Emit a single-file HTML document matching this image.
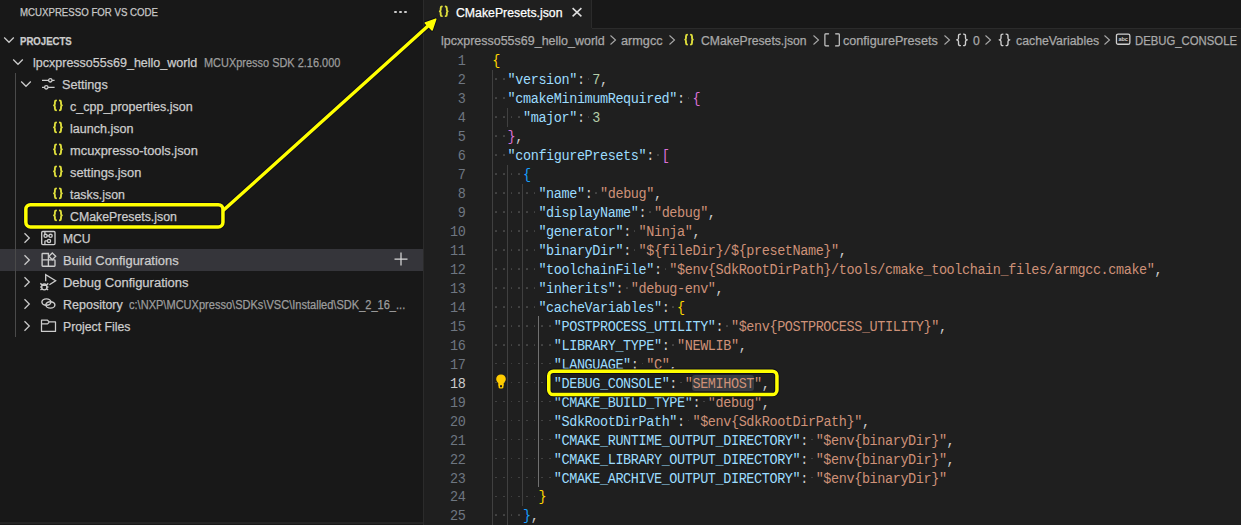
<!DOCTYPE html>
<html><head><meta charset="utf-8"><style>
html,body{margin:0;padding:0;}
body{width:1241px;height:525px;overflow:hidden;position:relative;background:#1f1f1f;font-family:"Liberation Sans",sans-serif;}
.t{position:absolute;white-space:pre;transform-origin:0 0;-webkit-text-stroke:0.25px currentColor;}
.ln{position:absolute;left:418.5px;width:47px;text-align:right;font-family:"Liberation Mono",monospace;font-size:13.5px;line-height:19px;letter-spacing:-0.4px;transform:scaleY(1.07);transform-origin:0 14px;}
.cl{position:absolute;left:492.2px;white-space:pre;font-family:"Liberation Mono",monospace;font-size:13.5px;line-height:19px;letter-spacing:-0.4px;transform:scaleY(1.07);transform-origin:0 14px;}
</style></head><body>
<div style="position:absolute;left:0px;top:0px;width:423px;height:525px;background:#181818;"></div>
<div style="position:absolute;left:423px;top:0px;width:1px;height:525px;background:#2b2b2b;"></div>
<div style="position:absolute;left:0px;top:522px;width:423px;height:2px;background:#242424;"></div>
<div style="position:absolute;left:424px;top:0px;width:817px;height:28px;background:#181818;"></div>
<div style="position:absolute;left:592px;top:28px;width:649px;height:1px;background:#2b2b2b;"></div>
<div style="position:absolute;left:424px;top:0px;width:167px;height:29px;background:#1f1f1f;"></div>
<div style="position:absolute;left:591px;top:0px;width:1px;height:28px;background:#2b2b2b;"></div>
<div class="t" style="left:19.70px;top:6.04px;font-size:11px;line-height:12.65px;color:#c8c8c8;font-weight:normal;transform:scaleX(0.8783)">MCUXPRESSO FOR VS CODE</div>
<div style="position:absolute;left:393.8px;top:10.5px;width:2.8px;height:2.8px;border-radius:50%;background:#cccccc"></div>
<div style="position:absolute;left:398.8px;top:10.5px;width:2.8px;height:2.8px;border-radius:50%;background:#cccccc"></div>
<div style="position:absolute;left:403.8px;top:10.5px;width:2.8px;height:2.8px;border-radius:50%;background:#cccccc"></div>
<div class="t" style="left:19.70px;top:34.84px;font-size:11px;line-height:12.65px;color:#cccccc;font-weight:bold;transform:scaleX(0.8726)">PROJECTS</div>
<svg style="position:absolute;left:3.3000000000000007px;top:34.3px" width="12" height="12" viewBox="0 0 12 12"><path d="M1.2 3.5 L6 8.3 L10.8 3.5" fill="none" stroke="#cccccc" stroke-width="1.25"/></svg>
<div style="position:absolute;left:0px;top:249px;width:423px;height:22px;background:#35353a;"></div>
<div style="position:absolute;left:15px;top:73px;width:1px;height:264px;background:#4a4a4a;"></div>
<svg style="position:absolute;left:12.3px;top:56px" width="12" height="12" viewBox="0 0 12 12"><path d="M1.2 3.5 L6 8.3 L10.8 3.5" fill="none" stroke="#cccccc" stroke-width="1.25"/></svg>
<div class="t" style="left:32.60px;top:55.79px;font-size:12.5px;line-height:14.37px;color:#cccccc;font-weight:normal;transform:scaleX(1.0012)">lpcxpresso55s69_hello_world</div>
<div class="t" style="left:203.50px;top:57.24px;font-size:12px;line-height:13.80px;color:#9d9d9d;font-weight:normal;transform:scaleX(0.9125)">MCUXpresso SDK 2.16.000</div>
<svg style="position:absolute;left:20.3px;top:78px" width="12" height="12" viewBox="0 0 12 12"><path d="M1.2 3.5 L6 8.3 L10.8 3.5" fill="none" stroke="#cccccc" stroke-width="1.25"/></svg>
<svg style="position:absolute;left:40px;top:76px" width="16" height="16" viewBox="0 0 16 16"><g stroke="#cccccc" stroke-width="1.3" fill="none"><path d="M2 4.3 H8.6 M12 4.3 H14.6"/><circle cx="10.3" cy="4.3" r="1.7"/><path d="M2 11.3 H4.6 M8 11.3 H14.6"/><circle cx="6.3" cy="11.3" r="1.7"/></g></svg>
<div class="t" style="left:62.30px;top:78.09px;font-size:12.5px;line-height:14.37px;color:#cccccc;font-weight:normal;transform:scaleX(1.0127)">Settings</div>
<svg style="position:absolute;left:0;top:0;overflow:visible" width="1" height="1"><path d="M56.05 100.45 Q54.89 100.45 54.89 102.15 V103.65 Q54.89 104.95 54.02 105.35 Q54.89 105.75 54.89 107.05 V108.55 Q54.89 110.25 56.05 110.25 M59.85 100.45 Q61.01 100.45 61.01 102.15 V103.65 Q61.01 104.95 61.88 105.35 Q61.01 105.75 61.01 107.05 V108.55 Q61.01 110.25 59.85 110.25" fill="none" stroke="#dede3c" stroke-width="1.9" stroke-linecap="round" stroke-linejoin="round"/></svg>
<div class="t" style="left:70.20px;top:100.09px;font-size:12.5px;line-height:14.37px;color:#cccccc;font-weight:normal;transform:scaleX(1.0037)">c_cpp_properties.json</div>
<svg style="position:absolute;left:0;top:0;overflow:visible" width="1" height="1"><path d="M56.05 122.45 Q54.89 122.45 54.89 124.15 V125.65 Q54.89 126.95 54.02 127.35 Q54.89 127.75 54.89 129.05 V130.55 Q54.89 132.25 56.05 132.25 M59.85 122.45 Q61.01 122.45 61.01 124.15 V125.65 Q61.01 126.95 61.88 127.35 Q61.01 127.75 61.01 129.05 V130.55 Q61.01 132.25 59.85 132.25" fill="none" stroke="#dede3c" stroke-width="1.9" stroke-linecap="round" stroke-linejoin="round"/></svg>
<div class="t" style="left:70.20px;top:122.09px;font-size:12.5px;line-height:14.37px;color:#cccccc;font-weight:normal;transform:scaleX(1.0040)">launch.json</div>
<svg style="position:absolute;left:0;top:0;overflow:visible" width="1" height="1"><path d="M56.05 144.45 Q54.89 144.45 54.89 146.15 V147.65 Q54.89 148.95 54.02 149.35 Q54.89 149.75 54.89 151.05 V152.55 Q54.89 154.25 56.05 154.25 M59.85 144.45 Q61.01 144.45 61.01 146.15 V147.65 Q61.01 148.95 61.88 149.35 Q61.01 149.75 61.01 151.05 V152.55 Q61.01 154.25 59.85 154.25" fill="none" stroke="#dede3c" stroke-width="1.9" stroke-linecap="round" stroke-linejoin="round"/></svg>
<div class="t" style="left:70.20px;top:144.09px;font-size:12.5px;line-height:14.37px;color:#cccccc;font-weight:normal;transform:scaleX(1.0283)">mcuxpresso-tools.json</div>
<svg style="position:absolute;left:0;top:0;overflow:visible" width="1" height="1"><path d="M56.05 166.45 Q54.89 166.45 54.89 168.15 V169.65 Q54.89 170.95 54.02 171.35 Q54.89 171.75 54.89 173.05 V174.55 Q54.89 176.25 56.05 176.25 M59.85 166.45 Q61.01 166.45 61.01 168.15 V169.65 Q61.01 170.95 61.88 171.35 Q61.01 171.75 61.01 173.05 V174.55 Q61.01 176.25 59.85 176.25" fill="none" stroke="#dede3c" stroke-width="1.9" stroke-linecap="round" stroke-linejoin="round"/></svg>
<div class="t" style="left:70.20px;top:166.09px;font-size:12.5px;line-height:14.37px;color:#cccccc;font-weight:normal;transform:scaleX(1.0259)">settings.json</div>
<svg style="position:absolute;left:0;top:0;overflow:visible" width="1" height="1"><path d="M56.05 188.45 Q54.89 188.45 54.89 190.15 V191.65 Q54.89 192.95 54.02 193.35 Q54.89 193.75 54.89 195.05 V196.55 Q54.89 198.25 56.05 198.25 M59.85 188.45 Q61.01 188.45 61.01 190.15 V191.65 Q61.01 192.95 61.88 193.35 Q61.01 193.75 61.01 195.05 V196.55 Q61.01 198.25 59.85 198.25" fill="none" stroke="#dede3c" stroke-width="1.9" stroke-linecap="round" stroke-linejoin="round"/></svg>
<div class="t" style="left:70.20px;top:188.09px;font-size:12.5px;line-height:14.37px;color:#cccccc;font-weight:normal;transform:scaleX(0.9870)">tasks.json</div>
<svg style="position:absolute;left:0;top:0;overflow:visible" width="1" height="1"><path d="M56.05 210.45 Q54.89 210.45 54.89 212.15 V213.65 Q54.89 214.95 54.02 215.35 Q54.89 215.75 54.89 217.05 V218.55 Q54.89 220.25 56.05 220.25 M59.85 210.45 Q61.01 210.45 61.01 212.15 V213.65 Q61.01 214.95 61.88 215.35 Q61.01 215.75 61.01 217.05 V218.55 Q61.01 220.25 59.85 220.25" fill="none" stroke="#dede3c" stroke-width="1.9" stroke-linecap="round" stroke-linejoin="round"/></svg>
<div class="t" style="left:70.20px;top:210.09px;font-size:12.5px;line-height:14.37px;color:#cccccc;font-weight:normal;transform:scaleX(0.9864)">CMakePresets.json</div>
<svg style="position:absolute;left:20.8px;top:232px" width="12" height="12" viewBox="0 0 12 12"><path d="M3.5 1.2 L8.3 6 L3.5 10.8" fill="none" stroke="#cccccc" stroke-width="1.25"/></svg>
<div class="t" style="left:62.90px;top:232.09px;font-size:12.5px;line-height:14.37px;color:#cccccc;font-weight:normal;transform:scaleX(0.9684)">MCU</div>
<svg style="position:absolute;left:20.8px;top:254px" width="12" height="12" viewBox="0 0 12 12"><path d="M3.5 1.2 L8.3 6 L3.5 10.8" fill="none" stroke="#cccccc" stroke-width="1.25"/></svg>
<div class="t" style="left:62.90px;top:254.09px;font-size:12.5px;line-height:14.37px;color:#cccccc;font-weight:normal;transform:scaleX(1.0333)">Build Configurations</div>
<svg style="position:absolute;left:20.8px;top:276px" width="12" height="12" viewBox="0 0 12 12"><path d="M3.5 1.2 L8.3 6 L3.5 10.8" fill="none" stroke="#cccccc" stroke-width="1.25"/></svg>
<div class="t" style="left:62.90px;top:276.09px;font-size:12.5px;line-height:14.37px;color:#cccccc;font-weight:normal;transform:scaleX(1.0383)">Debug Configurations</div>
<svg style="position:absolute;left:20.8px;top:298px" width="12" height="12" viewBox="0 0 12 12"><path d="M3.5 1.2 L8.3 6 L3.5 10.8" fill="none" stroke="#cccccc" stroke-width="1.25"/></svg>
<div class="t" style="left:62.90px;top:298.09px;font-size:12.5px;line-height:14.37px;color:#cccccc;font-weight:normal;transform:scaleX(1.0008)">Repository</div>
<svg style="position:absolute;left:20.8px;top:320px" width="12" height="12" viewBox="0 0 12 12"><path d="M3.5 1.2 L8.3 6 L3.5 10.8" fill="none" stroke="#cccccc" stroke-width="1.25"/></svg>
<div class="t" style="left:62.90px;top:320.09px;font-size:12.5px;line-height:14.37px;color:#cccccc;font-weight:normal;transform:scaleX(0.9804)">Project Files</div>
<div class="t" style="left:129.20px;top:299.34px;font-size:12px;line-height:13.80px;color:#9d9d9d;font-weight:normal;transform:scaleX(0.9203)">c:\NXP\MCUXpresso\SDKs\VSC\Installed\SDK_2_16_...</div>
<svg style="position:absolute;left:38px;top:228px" width="22" height="20" viewBox="0 0 22 20"><g stroke="#cccccc" stroke-width="1.35" fill="none"><rect x="3.7" y="3.5" width="13.3" height="13.1" rx="1"/><circle cx="7.6" cy="7.8" r="1.6"/><circle cx="12.6" cy="7.8" r="1.6"/><circle cx="11" cy="12.9" r="1.6"/><path d="M6.9 4 V6.2 M9.2 7.8 H11 M9.4 12.9 H7.6 Q6.9 12.9 6.9 13.6 V16.6"/></g></svg>
<svg style="position:absolute;left:38px;top:250px" width="22" height="20" viewBox="0 0 22 20"><g stroke="#cccccc" stroke-width="1.35" fill="none"><path d="M4.1 4.1 Q4.1 3.5 4.7 3.5 H10.4 V16.2 H4.7 Q4.1 16.2 4.1 15.6 Z"/><path d="M4.1 9.9 H16.4 Q17 9.9 17 10.5 V15.6 Q17 16.2 16.4 16.2 H10.4"/><path d="M14.3 2.9 L17.7 6.3 L14.3 9.7 L10.9 6.3 Z"/></g></svg>
<svg style="position:absolute;left:36px;top:272px" width="24" height="20" viewBox="0 0 24 20"><g stroke="#cccccc" stroke-width="1.35" fill="none"><path d="M9.7 9.2 V2.6 L19.6 8.8 L13.4 12.8"/><ellipse cx="8.3" cy="14.9" rx="2.6" ry="2.9"/><path d="M5.7 13.2 H10.9 M4.3 11.4 L5.8 12.6 M12.3 11.4 L10.8 12.6 M4.2 15 H5.6 M11 15 H12.4 M4.5 18 L5.9 16.8 M12.1 18 L10.7 16.8"/></g></svg>
<svg style="position:absolute;left:36px;top:294px" width="24" height="20" viewBox="0 0 24 20"><g stroke="#cccccc" stroke-width="1.4" fill="none"><ellipse cx="10.4" cy="8.1" rx="4.5" ry="3.2"/><ellipse cx="14.4" cy="10.9" rx="4.5" ry="3.2"/></g></svg>
<svg style="position:absolute;left:36px;top:316px" width="24" height="20" viewBox="0 0 24 20"><g stroke="#cccccc" stroke-width="1.25" fill="none" stroke-linejoin="round"><path d="M5.5 4.2 H11.5 L13.2 5.9 H19.5 V15.4 H5.5 Z"/><path d="M5.5 7.9 H11.5 L13.2 6.2"/></g></svg>
<svg style="position:absolute;left:392.5px;top:251px" width="16" height="16" viewBox="0 0 16 16"><path d="M8 1.5 V14.5 M1.5 8 H14.5" stroke="#d8d8d8" stroke-width="1.25"/></svg>
<svg style="position:absolute;left:0;top:0;overflow:visible" width="1" height="1"><path d="M441.85 6.45 Q440.69 6.45 440.69 8.15 V9.60 Q440.69 10.90 439.82 11.30 Q440.69 11.70 440.69 13.00 V14.45 Q440.69 16.15 441.85 16.15 M445.65 6.45 Q446.81 6.45 446.81 8.15 V9.60 Q446.81 10.90 447.67 11.30 Q446.81 11.70 446.81 13.00 V14.45 Q446.81 16.15 445.65 16.15" fill="none" stroke="#dede3c" stroke-width="1.9" stroke-linecap="round" stroke-linejoin="round"/></svg>
<div class="t" style="left:456.10px;top:5.59px;font-size:12.5px;line-height:14.37px;color:#ffffff;font-weight:normal;transform:scaleX(0.9827)">CMakePresets.json</div>
<svg style="position:absolute;left:570px;top:5px" width="14" height="14" viewBox="0 0 14 14"><path d="M2.6 3.1 L11.4 11.4 M11.4 3.1 L2.6 11.4" stroke="#e0e0e0" stroke-width="1.5"/></svg>
<div class="t" style="left:440.50px;top:34.09px;font-size:12.5px;line-height:14.37px;color:#a9a9a9;font-weight:normal;transform:scaleX(0.9988)">lpcxpresso55s69_hello_world</div>
<svg style="position:absolute;left:608px;top:33px" width="10" height="14" viewBox="0 0 10 14"><path d="M2.5 2.5 L7.5 7 L2.5 11.5" fill="none" stroke="#a9a9a9" stroke-width="1.1"/></svg>
<div class="t" style="left:621.00px;top:34.09px;font-size:12.5px;line-height:14.37px;color:#a9a9a9;font-weight:normal;transform:scaleX(1.0146)">armgcc</div>
<svg style="position:absolute;left:666.8px;top:33px" width="10" height="14" viewBox="0 0 10 14"><path d="M2.5 2.5 L7.5 7 L2.5 11.5" fill="none" stroke="#a9a9a9" stroke-width="1.1"/></svg>
<svg style="position:absolute;left:0;top:0;overflow:visible" width="1" height="1"><path d="M687.05 34.75 Q685.98 34.75 685.98 36.45 V37.95 Q685.98 39.25 685.22 39.65 Q685.98 40.05 685.98 41.35 V42.85 Q685.98 44.55 687.05 44.55 M690.95 34.75 Q692.02 34.75 692.02 36.45 V37.95 Q692.02 39.25 692.78 39.65 Q692.02 40.05 692.02 41.35 V42.85 Q692.02 44.55 690.95 44.55" fill="none" stroke="#dede3c" stroke-width="1.9" stroke-linecap="round" stroke-linejoin="round"/></svg>
<div class="t" style="left:701.00px;top:34.09px;font-size:12.5px;line-height:14.37px;color:#a9a9a9;font-weight:normal;transform:scaleX(0.9744)">CMakePresets.json</div>
<svg style="position:absolute;left:810.8px;top:33px" width="10" height="14" viewBox="0 0 10 14"><path d="M2.5 2.5 L7.5 7 L2.5 11.5" fill="none" stroke="#a9a9a9" stroke-width="1.1"/></svg>
<svg style="position:absolute;left:818px;top:30px" width="24" height="20" viewBox="0 0 24 20"><g stroke="#cfcfcf" stroke-width="1.15" fill="none" stroke-linecap="round" stroke-linejoin="round"><path d="M10.6 3.8 H7.7 Q6.9 3.8 6.9 4.6 V15.1 Q6.9 15.9 7.7 15.9 H10.6"/><path d="M17.6 3.8 H20.5 Q21.3 3.8 21.3 4.6 V15.1 Q21.3 15.9 20.5 15.9 H17.6"/></g></svg>
<div class="t" style="left:843.00px;top:34.09px;font-size:12.5px;line-height:14.37px;color:#a9a9a9;font-weight:normal;transform:scaleX(1.0101)">configurePresets</div>
<svg style="position:absolute;left:941.8px;top:33px" width="10" height="14" viewBox="0 0 10 14"><path d="M2.5 2.5 L7.5 7 L2.5 11.5" fill="none" stroke="#a9a9a9" stroke-width="1.1"/></svg>
<svg style="position:absolute;left:0;top:0;overflow:visible" width="1" height="1"><path d="M960.43 34.07 Q958.51 34.07 958.51 35.77 V38.15 Q958.51 39.45 956.71 39.85 Q958.51 40.25 958.51 41.55 V43.92 Q958.51 45.62 960.43 45.62 M963.57 34.07 Q965.49 34.07 965.49 35.77 V38.15 Q965.49 39.45 967.29 39.85 Q965.49 40.25 965.49 41.55 V43.92 Q965.49 45.62 963.57 45.62" fill="none" stroke="#cfcfcf" stroke-width="1.35" stroke-linecap="round" stroke-linejoin="round"/></svg>
<div class="t" style="left:972.60px;top:34.09px;font-size:12.5px;line-height:14.37px;color:#a9a9a9;font-weight:normal;transform:scaleX(0.9714)">0</div>
<svg style="position:absolute;left:983px;top:33px" width="10" height="14" viewBox="0 0 10 14"><path d="M2.5 2.5 L7.5 7 L2.5 11.5" fill="none" stroke="#a9a9a9" stroke-width="1.1"/></svg>
<svg style="position:absolute;left:0;top:0;overflow:visible" width="1" height="1"><path d="M1002.93 34.07 Q1001.01 34.07 1001.01 35.77 V38.15 Q1001.01 39.45 999.21 39.85 Q1001.01 40.25 1001.01 41.55 V43.92 Q1001.01 45.62 1002.93 45.62 M1006.07 34.07 Q1007.99 34.07 1007.99 35.77 V38.15 Q1007.99 39.45 1009.79 39.85 Q1007.99 40.25 1007.99 41.55 V43.92 Q1007.99 45.62 1006.07 45.62" fill="none" stroke="#cfcfcf" stroke-width="1.35" stroke-linecap="round" stroke-linejoin="round"/></svg>
<div class="t" style="left:1015.70px;top:34.09px;font-size:12.5px;line-height:14.37px;color:#a9a9a9;font-weight:normal;transform:scaleX(0.9834)">cacheVariables</div>
<svg style="position:absolute;left:1102px;top:33px" width="10" height="14" viewBox="0 0 10 14"><path d="M2.5 2.5 L7.5 7 L2.5 11.5" fill="none" stroke="#a9a9a9" stroke-width="1.1"/></svg>
<svg style="position:absolute;left:1114px;top:30px" width="18" height="18" viewBox="0 0 18 18"><g fill="none" stroke="#cfcfcf" stroke-width="1.3"><rect x="2.45" y="4.05" width="13.4" height="10.2" rx="1.6"/></g><text x="9.1" y="11.1" text-anchor="middle" font-family="Liberation Sans" font-weight="bold" font-size="5.6" fill="#cfcfcf" letter-spacing="-0.2">abc</text></svg>
<div class="t" style="left:1134.50px;top:34.09px;font-size:12.5px;line-height:14.37px;color:#a9a9a9;font-weight:normal;transform:scaleX(0.9067)">DEBUG_CONSOLE</div>
<div style="position:absolute;left:692px;top:374.5px;width:61.5px;height:16.7px;background:#393c40;border-radius:3px"></div>
<div style="position:absolute;left:492px;top:69.75999999999999px;width:1px;height:455.04px;background:#404040;"></div>
<div style="position:absolute;left:507px;top:107.68px;width:1px;height:18.96px;background:#404040;"></div>
<div style="position:absolute;left:507px;top:164.56px;width:1px;height:360.24px;background:#404040;"></div>
<div style="position:absolute;left:522px;top:183.51999999999998px;width:1px;height:322.32px;background:#404040;"></div>
<div style="position:absolute;left:538px;top:316.24px;width:1px;height:170.64000000000001px;background:#707070;"></div>
<div class="ln" style="top:52.40px;color:#6e7681">1</div>
<div class="cl" style="top:52.40px"><span style="color:#ffd700">{</span></div>
<div class="ln" style="top:71.36px;color:#6e7681">2</div>
<div style="position:absolute;left:495.2px;top:78.41px;width:1.7px;height:1.7px;background:#474747;border-radius:50%"></div>
<div style="position:absolute;left:502.9px;top:78.41px;width:1.7px;height:1.7px;background:#474747;border-radius:50%"></div>
<div style="position:absolute;left:587.6px;top:78.41px;width:1.7px;height:1.7px;background:#474747;border-radius:50%"></div>
<div class="cl" style="top:71.36px">  <span style="color:#9cdcfe">&quot;version&quot;</span><span style="color:#cccccc">:</span> <span style="color:#b5cea8">7</span><span style="color:#cccccc">,</span></div>
<div class="ln" style="top:90.32px;color:#6e7681">3</div>
<div style="position:absolute;left:495.2px;top:97.37px;width:1.7px;height:1.7px;background:#474747;border-radius:50%"></div>
<div style="position:absolute;left:502.9px;top:97.37px;width:1.7px;height:1.7px;background:#474747;border-radius:50%"></div>
<div style="position:absolute;left:687.7px;top:97.37px;width:1.7px;height:1.7px;background:#474747;border-radius:50%"></div>
<div class="cl" style="top:90.32px">  <span style="color:#9cdcfe">&quot;cmakeMinimumRequired&quot;</span><span style="color:#cccccc">:</span> <span style="color:#da70d6">{</span></div>
<div class="ln" style="top:109.28px;color:#6e7681">4</div>
<div style="position:absolute;left:495.2px;top:116.33000000000001px;width:1.7px;height:1.7px;background:#474747;border-radius:50%"></div>
<div style="position:absolute;left:502.9px;top:116.33000000000001px;width:1.7px;height:1.7px;background:#474747;border-radius:50%"></div>
<div style="position:absolute;left:510.6px;top:116.33000000000001px;width:1.7px;height:1.7px;background:#474747;border-radius:50%"></div>
<div style="position:absolute;left:518.3px;top:116.33000000000001px;width:1.7px;height:1.7px;background:#474747;border-radius:50%"></div>
<div style="position:absolute;left:587.6px;top:116.33000000000001px;width:1.7px;height:1.7px;background:#474747;border-radius:50%"></div>
<div class="cl" style="top:109.28px">    <span style="color:#9cdcfe">&quot;major&quot;</span><span style="color:#cccccc">:</span> <span style="color:#b5cea8">3</span></div>
<div class="ln" style="top:128.24px;color:#6e7681">5</div>
<div style="position:absolute;left:495.2px;top:135.29px;width:1.7px;height:1.7px;background:#474747;border-radius:50%"></div>
<div style="position:absolute;left:502.9px;top:135.29px;width:1.7px;height:1.7px;background:#474747;border-radius:50%"></div>
<div class="cl" style="top:128.24px">  <span style="color:#da70d6">}</span><span style="color:#cccccc">,</span></div>
<div class="ln" style="top:147.20px;color:#6e7681">6</div>
<div style="position:absolute;left:495.2px;top:154.25000000000003px;width:1.7px;height:1.7px;background:#474747;border-radius:50%"></div>
<div style="position:absolute;left:502.9px;top:154.25000000000003px;width:1.7px;height:1.7px;background:#474747;border-radius:50%"></div>
<div style="position:absolute;left:656.9px;top:154.25000000000003px;width:1.7px;height:1.7px;background:#474747;border-radius:50%"></div>
<div class="cl" style="top:147.20px">  <span style="color:#9cdcfe">&quot;configurePresets&quot;</span><span style="color:#cccccc">:</span> <span style="color:#da70d6">[</span></div>
<div class="ln" style="top:166.16px;color:#6e7681">7</div>
<div style="position:absolute;left:495.2px;top:173.21px;width:1.7px;height:1.7px;background:#474747;border-radius:50%"></div>
<div style="position:absolute;left:502.9px;top:173.21px;width:1.7px;height:1.7px;background:#474747;border-radius:50%"></div>
<div style="position:absolute;left:510.6px;top:173.21px;width:1.7px;height:1.7px;background:#474747;border-radius:50%"></div>
<div style="position:absolute;left:518.3px;top:173.21px;width:1.7px;height:1.7px;background:#474747;border-radius:50%"></div>
<div class="cl" style="top:166.16px">    <span style="color:#179fff">{</span></div>
<div class="ln" style="top:185.12px;color:#6e7681">8</div>
<div style="position:absolute;left:495.2px;top:192.17px;width:1.7px;height:1.7px;background:#474747;border-radius:50%"></div>
<div style="position:absolute;left:502.9px;top:192.17px;width:1.7px;height:1.7px;background:#474747;border-radius:50%"></div>
<div style="position:absolute;left:510.6px;top:192.17px;width:1.7px;height:1.7px;background:#474747;border-radius:50%"></div>
<div style="position:absolute;left:518.3px;top:192.17px;width:1.7px;height:1.7px;background:#474747;border-radius:50%"></div>
<div style="position:absolute;left:526.0px;top:192.17px;width:1.7px;height:1.7px;background:#474747;border-radius:50%"></div>
<div style="position:absolute;left:533.7px;top:192.17px;width:1.7px;height:1.7px;background:#474747;border-radius:50%"></div>
<div style="position:absolute;left:595.3px;top:192.17px;width:1.7px;height:1.7px;background:#474747;border-radius:50%"></div>
<div class="cl" style="top:185.12px">      <span style="color:#9cdcfe">&quot;name&quot;</span><span style="color:#cccccc">:</span> <span style="color:#ce9178">&quot;debug&quot;</span><span style="color:#cccccc">,</span></div>
<div class="ln" style="top:204.08px;color:#6e7681">9</div>
<div style="position:absolute;left:495.2px;top:211.13000000000002px;width:1.7px;height:1.7px;background:#474747;border-radius:50%"></div>
<div style="position:absolute;left:502.9px;top:211.13000000000002px;width:1.7px;height:1.7px;background:#474747;border-radius:50%"></div>
<div style="position:absolute;left:510.6px;top:211.13000000000002px;width:1.7px;height:1.7px;background:#474747;border-radius:50%"></div>
<div style="position:absolute;left:518.3px;top:211.13000000000002px;width:1.7px;height:1.7px;background:#474747;border-radius:50%"></div>
<div style="position:absolute;left:526.0px;top:211.13000000000002px;width:1.7px;height:1.7px;background:#474747;border-radius:50%"></div>
<div style="position:absolute;left:533.7px;top:211.13000000000002px;width:1.7px;height:1.7px;background:#474747;border-radius:50%"></div>
<div style="position:absolute;left:649.2px;top:211.13000000000002px;width:1.7px;height:1.7px;background:#474747;border-radius:50%"></div>
<div class="cl" style="top:204.08px">      <span style="color:#9cdcfe">&quot;displayName&quot;</span><span style="color:#cccccc">:</span> <span style="color:#ce9178">&quot;debug&quot;</span><span style="color:#cccccc">,</span></div>
<div class="ln" style="top:223.04px;color:#6e7681">10</div>
<div style="position:absolute;left:495.2px;top:230.09px;width:1.7px;height:1.7px;background:#474747;border-radius:50%"></div>
<div style="position:absolute;left:502.9px;top:230.09px;width:1.7px;height:1.7px;background:#474747;border-radius:50%"></div>
<div style="position:absolute;left:510.6px;top:230.09px;width:1.7px;height:1.7px;background:#474747;border-radius:50%"></div>
<div style="position:absolute;left:518.3px;top:230.09px;width:1.7px;height:1.7px;background:#474747;border-radius:50%"></div>
<div style="position:absolute;left:526.0px;top:230.09px;width:1.7px;height:1.7px;background:#474747;border-radius:50%"></div>
<div style="position:absolute;left:533.7px;top:230.09px;width:1.7px;height:1.7px;background:#474747;border-radius:50%"></div>
<div style="position:absolute;left:633.8px;top:230.09px;width:1.7px;height:1.7px;background:#474747;border-radius:50%"></div>
<div class="cl" style="top:223.04px">      <span style="color:#9cdcfe">&quot;generator&quot;</span><span style="color:#cccccc">:</span> <span style="color:#ce9178">&quot;Ninja&quot;</span><span style="color:#cccccc">,</span></div>
<div class="ln" style="top:242.00px;color:#6e7681">11</div>
<div style="position:absolute;left:495.2px;top:249.05000000000004px;width:1.7px;height:1.7px;background:#474747;border-radius:50%"></div>
<div style="position:absolute;left:502.9px;top:249.05000000000004px;width:1.7px;height:1.7px;background:#474747;border-radius:50%"></div>
<div style="position:absolute;left:510.6px;top:249.05000000000004px;width:1.7px;height:1.7px;background:#474747;border-radius:50%"></div>
<div style="position:absolute;left:518.3px;top:249.05000000000004px;width:1.7px;height:1.7px;background:#474747;border-radius:50%"></div>
<div style="position:absolute;left:526.0px;top:249.05000000000004px;width:1.7px;height:1.7px;background:#474747;border-radius:50%"></div>
<div style="position:absolute;left:533.7px;top:249.05000000000004px;width:1.7px;height:1.7px;background:#474747;border-radius:50%"></div>
<div style="position:absolute;left:633.8px;top:249.05000000000004px;width:1.7px;height:1.7px;background:#474747;border-radius:50%"></div>
<div class="cl" style="top:242.00px">      <span style="color:#9cdcfe">&quot;binaryDir&quot;</span><span style="color:#cccccc">:</span> <span style="color:#ce9178">&quot;${fileDir}/${presetName}&quot;</span><span style="color:#cccccc">,</span></div>
<div class="ln" style="top:260.96px;color:#6e7681">12</div>
<div style="position:absolute;left:495.2px;top:268.01px;width:1.7px;height:1.7px;background:#474747;border-radius:50%"></div>
<div style="position:absolute;left:502.9px;top:268.01px;width:1.7px;height:1.7px;background:#474747;border-radius:50%"></div>
<div style="position:absolute;left:510.6px;top:268.01px;width:1.7px;height:1.7px;background:#474747;border-radius:50%"></div>
<div style="position:absolute;left:518.3px;top:268.01px;width:1.7px;height:1.7px;background:#474747;border-radius:50%"></div>
<div style="position:absolute;left:526.0px;top:268.01px;width:1.7px;height:1.7px;background:#474747;border-radius:50%"></div>
<div style="position:absolute;left:533.7px;top:268.01px;width:1.7px;height:1.7px;background:#474747;border-radius:50%"></div>
<div style="position:absolute;left:664.6px;top:268.01px;width:1.7px;height:1.7px;background:#474747;border-radius:50%"></div>
<div class="cl" style="top:260.96px">      <span style="color:#9cdcfe">&quot;toolchainFile&quot;</span><span style="color:#cccccc">:</span> <span style="color:#ce9178">&quot;$env{SdkRootDirPath}/tools/cmake_toolchain_files/armgcc.cmake&quot;</span><span style="color:#cccccc">,</span></div>
<div class="ln" style="top:279.92px;color:#6e7681">13</div>
<div style="position:absolute;left:495.2px;top:286.96999999999997px;width:1.7px;height:1.7px;background:#474747;border-radius:50%"></div>
<div style="position:absolute;left:502.9px;top:286.96999999999997px;width:1.7px;height:1.7px;background:#474747;border-radius:50%"></div>
<div style="position:absolute;left:510.6px;top:286.96999999999997px;width:1.7px;height:1.7px;background:#474747;border-radius:50%"></div>
<div style="position:absolute;left:518.3px;top:286.96999999999997px;width:1.7px;height:1.7px;background:#474747;border-radius:50%"></div>
<div style="position:absolute;left:526.0px;top:286.96999999999997px;width:1.7px;height:1.7px;background:#474747;border-radius:50%"></div>
<div style="position:absolute;left:533.7px;top:286.96999999999997px;width:1.7px;height:1.7px;background:#474747;border-radius:50%"></div>
<div style="position:absolute;left:626.1px;top:286.96999999999997px;width:1.7px;height:1.7px;background:#474747;border-radius:50%"></div>
<div class="cl" style="top:279.92px">      <span style="color:#9cdcfe">&quot;inherits&quot;</span><span style="color:#cccccc">:</span> <span style="color:#ce9178">&quot;debug-env&quot;</span><span style="color:#cccccc">,</span></div>
<div class="ln" style="top:298.88px;color:#6e7681">14</div>
<div style="position:absolute;left:495.2px;top:305.93px;width:1.7px;height:1.7px;background:#474747;border-radius:50%"></div>
<div style="position:absolute;left:502.9px;top:305.93px;width:1.7px;height:1.7px;background:#474747;border-radius:50%"></div>
<div style="position:absolute;left:510.6px;top:305.93px;width:1.7px;height:1.7px;background:#474747;border-radius:50%"></div>
<div style="position:absolute;left:518.3px;top:305.93px;width:1.7px;height:1.7px;background:#474747;border-radius:50%"></div>
<div style="position:absolute;left:526.0px;top:305.93px;width:1.7px;height:1.7px;background:#474747;border-radius:50%"></div>
<div style="position:absolute;left:533.7px;top:305.93px;width:1.7px;height:1.7px;background:#474747;border-radius:50%"></div>
<div style="position:absolute;left:672.3px;top:305.93px;width:1.7px;height:1.7px;background:#474747;border-radius:50%"></div>
<div class="cl" style="top:298.88px">      <span style="color:#9cdcfe">&quot;cacheVariables&quot;</span><span style="color:#cccccc">:</span> <span style="color:#ffd700">{</span></div>
<div class="ln" style="top:317.84px;color:#6e7681">15</div>
<div style="position:absolute;left:495.2px;top:324.89px;width:1.7px;height:1.7px;background:#474747;border-radius:50%"></div>
<div style="position:absolute;left:502.9px;top:324.89px;width:1.7px;height:1.7px;background:#474747;border-radius:50%"></div>
<div style="position:absolute;left:510.6px;top:324.89px;width:1.7px;height:1.7px;background:#474747;border-radius:50%"></div>
<div style="position:absolute;left:518.3px;top:324.89px;width:1.7px;height:1.7px;background:#474747;border-radius:50%"></div>
<div style="position:absolute;left:526.0px;top:324.89px;width:1.7px;height:1.7px;background:#474747;border-radius:50%"></div>
<div style="position:absolute;left:533.7px;top:324.89px;width:1.7px;height:1.7px;background:#474747;border-radius:50%"></div>
<div style="position:absolute;left:541.4px;top:324.89px;width:1.7px;height:1.7px;background:#474747;border-radius:50%"></div>
<div style="position:absolute;left:549.1px;top:324.89px;width:1.7px;height:1.7px;background:#474747;border-radius:50%"></div>
<div style="position:absolute;left:726.2px;top:324.89px;width:1.7px;height:1.7px;background:#474747;border-radius:50%"></div>
<div class="cl" style="top:317.84px">        <span style="color:#9cdcfe">&quot;POSTPROCESS_UTILITY&quot;</span><span style="color:#cccccc">:</span> <span style="color:#ce9178">&quot;$env{POSTPROCESS_UTILITY}&quot;</span><span style="color:#cccccc">,</span></div>
<div class="ln" style="top:336.80px;color:#6e7681">16</div>
<div style="position:absolute;left:495.2px;top:343.85px;width:1.7px;height:1.7px;background:#474747;border-radius:50%"></div>
<div style="position:absolute;left:502.9px;top:343.85px;width:1.7px;height:1.7px;background:#474747;border-radius:50%"></div>
<div style="position:absolute;left:510.6px;top:343.85px;width:1.7px;height:1.7px;background:#474747;border-radius:50%"></div>
<div style="position:absolute;left:518.3px;top:343.85px;width:1.7px;height:1.7px;background:#474747;border-radius:50%"></div>
<div style="position:absolute;left:526.0px;top:343.85px;width:1.7px;height:1.7px;background:#474747;border-radius:50%"></div>
<div style="position:absolute;left:533.7px;top:343.85px;width:1.7px;height:1.7px;background:#474747;border-radius:50%"></div>
<div style="position:absolute;left:541.4px;top:343.85px;width:1.7px;height:1.7px;background:#474747;border-radius:50%"></div>
<div style="position:absolute;left:549.1px;top:343.85px;width:1.7px;height:1.7px;background:#474747;border-radius:50%"></div>
<div style="position:absolute;left:672.3px;top:343.85px;width:1.7px;height:1.7px;background:#474747;border-radius:50%"></div>
<div class="cl" style="top:336.80px">        <span style="color:#9cdcfe">&quot;LIBRARY_TYPE&quot;</span><span style="color:#cccccc">:</span> <span style="color:#ce9178">&quot;NEWLIB&quot;</span><span style="color:#cccccc">,</span></div>
<div class="ln" style="top:355.76px;color:#6e7681">17</div>
<div style="position:absolute;left:495.2px;top:362.81px;width:1.7px;height:1.7px;background:#474747;border-radius:50%"></div>
<div style="position:absolute;left:502.9px;top:362.81px;width:1.7px;height:1.7px;background:#474747;border-radius:50%"></div>
<div style="position:absolute;left:510.6px;top:362.81px;width:1.7px;height:1.7px;background:#474747;border-radius:50%"></div>
<div style="position:absolute;left:518.3px;top:362.81px;width:1.7px;height:1.7px;background:#474747;border-radius:50%"></div>
<div style="position:absolute;left:526.0px;top:362.81px;width:1.7px;height:1.7px;background:#474747;border-radius:50%"></div>
<div style="position:absolute;left:533.7px;top:362.81px;width:1.7px;height:1.7px;background:#474747;border-radius:50%"></div>
<div style="position:absolute;left:541.4px;top:362.81px;width:1.7px;height:1.7px;background:#474747;border-radius:50%"></div>
<div style="position:absolute;left:549.1px;top:362.81px;width:1.7px;height:1.7px;background:#474747;border-radius:50%"></div>
<div style="position:absolute;left:641.5px;top:362.81px;width:1.7px;height:1.7px;background:#474747;border-radius:50%"></div>
<div class="cl" style="top:355.76px">        <span style="color:#9cdcfe">&quot;LANGUAGE&quot;</span><span style="color:#cccccc">:</span> <span style="color:#ce9178">&quot;C&quot;</span><span style="color:#cccccc">,</span></div>
<div class="ln" style="top:374.72px;color:#cccccc">18</div>
<div style="position:absolute;left:495.2px;top:381.77px;width:1.7px;height:1.7px;background:#474747;border-radius:50%"></div>
<div style="position:absolute;left:502.9px;top:381.77px;width:1.7px;height:1.7px;background:#474747;border-radius:50%"></div>
<div style="position:absolute;left:510.6px;top:381.77px;width:1.7px;height:1.7px;background:#474747;border-radius:50%"></div>
<div style="position:absolute;left:518.3px;top:381.77px;width:1.7px;height:1.7px;background:#474747;border-radius:50%"></div>
<div style="position:absolute;left:526.0px;top:381.77px;width:1.7px;height:1.7px;background:#474747;border-radius:50%"></div>
<div style="position:absolute;left:533.7px;top:381.77px;width:1.7px;height:1.7px;background:#474747;border-radius:50%"></div>
<div style="position:absolute;left:541.4px;top:381.77px;width:1.7px;height:1.7px;background:#474747;border-radius:50%"></div>
<div style="position:absolute;left:549.1px;top:381.77px;width:1.7px;height:1.7px;background:#474747;border-radius:50%"></div>
<div style="position:absolute;left:680.0px;top:381.77px;width:1.7px;height:1.7px;background:#474747;border-radius:50%"></div>
<div class="cl" style="top:374.72px">        <span style="color:#9cdcfe">&quot;DEBUG_CONSOLE&quot;</span><span style="color:#cccccc">:</span> <span style="color:#ce9178">&quot;SEMIHOST&quot;</span><span style="color:#cccccc">,</span></div>
<div class="ln" style="top:393.68px;color:#6e7681">19</div>
<div style="position:absolute;left:495.2px;top:400.73px;width:1.7px;height:1.7px;background:#474747;border-radius:50%"></div>
<div style="position:absolute;left:502.9px;top:400.73px;width:1.7px;height:1.7px;background:#474747;border-radius:50%"></div>
<div style="position:absolute;left:510.6px;top:400.73px;width:1.7px;height:1.7px;background:#474747;border-radius:50%"></div>
<div style="position:absolute;left:518.3px;top:400.73px;width:1.7px;height:1.7px;background:#474747;border-radius:50%"></div>
<div style="position:absolute;left:526.0px;top:400.73px;width:1.7px;height:1.7px;background:#474747;border-radius:50%"></div>
<div style="position:absolute;left:533.7px;top:400.73px;width:1.7px;height:1.7px;background:#474747;border-radius:50%"></div>
<div style="position:absolute;left:541.4px;top:400.73px;width:1.7px;height:1.7px;background:#474747;border-radius:50%"></div>
<div style="position:absolute;left:549.1px;top:400.73px;width:1.7px;height:1.7px;background:#474747;border-radius:50%"></div>
<div style="position:absolute;left:703.1px;top:400.73px;width:1.7px;height:1.7px;background:#474747;border-radius:50%"></div>
<div class="cl" style="top:393.68px">        <span style="color:#9cdcfe">&quot;CMAKE_BUILD_TYPE&quot;</span><span style="color:#cccccc">:</span> <span style="color:#ce9178">&quot;debug&quot;</span><span style="color:#cccccc">,</span></div>
<div class="ln" style="top:412.64px;color:#6e7681">20</div>
<div style="position:absolute;left:495.2px;top:419.69px;width:1.7px;height:1.7px;background:#474747;border-radius:50%"></div>
<div style="position:absolute;left:502.9px;top:419.69px;width:1.7px;height:1.7px;background:#474747;border-radius:50%"></div>
<div style="position:absolute;left:510.6px;top:419.69px;width:1.7px;height:1.7px;background:#474747;border-radius:50%"></div>
<div style="position:absolute;left:518.3px;top:419.69px;width:1.7px;height:1.7px;background:#474747;border-radius:50%"></div>
<div style="position:absolute;left:526.0px;top:419.69px;width:1.7px;height:1.7px;background:#474747;border-radius:50%"></div>
<div style="position:absolute;left:533.7px;top:419.69px;width:1.7px;height:1.7px;background:#474747;border-radius:50%"></div>
<div style="position:absolute;left:541.4px;top:419.69px;width:1.7px;height:1.7px;background:#474747;border-radius:50%"></div>
<div style="position:absolute;left:549.1px;top:419.69px;width:1.7px;height:1.7px;background:#474747;border-radius:50%"></div>
<div style="position:absolute;left:687.7px;top:419.69px;width:1.7px;height:1.7px;background:#474747;border-radius:50%"></div>
<div class="cl" style="top:412.64px">        <span style="color:#9cdcfe">&quot;SdkRootDirPath&quot;</span><span style="color:#cccccc">:</span> <span style="color:#ce9178">&quot;$env{SdkRootDirPath}&quot;</span><span style="color:#cccccc">,</span></div>
<div class="ln" style="top:431.60px;color:#6e7681">21</div>
<div style="position:absolute;left:495.2px;top:438.65000000000003px;width:1.7px;height:1.7px;background:#474747;border-radius:50%"></div>
<div style="position:absolute;left:502.9px;top:438.65000000000003px;width:1.7px;height:1.7px;background:#474747;border-radius:50%"></div>
<div style="position:absolute;left:510.6px;top:438.65000000000003px;width:1.7px;height:1.7px;background:#474747;border-radius:50%"></div>
<div style="position:absolute;left:518.3px;top:438.65000000000003px;width:1.7px;height:1.7px;background:#474747;border-radius:50%"></div>
<div style="position:absolute;left:526.0px;top:438.65000000000003px;width:1.7px;height:1.7px;background:#474747;border-radius:50%"></div>
<div style="position:absolute;left:533.7px;top:438.65000000000003px;width:1.7px;height:1.7px;background:#474747;border-radius:50%"></div>
<div style="position:absolute;left:541.4px;top:438.65000000000003px;width:1.7px;height:1.7px;background:#474747;border-radius:50%"></div>
<div style="position:absolute;left:549.1px;top:438.65000000000003px;width:1.7px;height:1.7px;background:#474747;border-radius:50%"></div>
<div style="position:absolute;left:810.9px;top:438.65000000000003px;width:1.7px;height:1.7px;background:#474747;border-radius:50%"></div>
<div class="cl" style="top:431.60px">        <span style="color:#9cdcfe">&quot;CMAKE_RUNTIME_OUTPUT_DIRECTORY&quot;</span><span style="color:#cccccc">:</span> <span style="color:#ce9178">&quot;$env{binaryDir}&quot;</span><span style="color:#cccccc">,</span></div>
<div class="ln" style="top:450.56px;color:#6e7681">22</div>
<div style="position:absolute;left:495.2px;top:457.61px;width:1.7px;height:1.7px;background:#474747;border-radius:50%"></div>
<div style="position:absolute;left:502.9px;top:457.61px;width:1.7px;height:1.7px;background:#474747;border-radius:50%"></div>
<div style="position:absolute;left:510.6px;top:457.61px;width:1.7px;height:1.7px;background:#474747;border-radius:50%"></div>
<div style="position:absolute;left:518.3px;top:457.61px;width:1.7px;height:1.7px;background:#474747;border-radius:50%"></div>
<div style="position:absolute;left:526.0px;top:457.61px;width:1.7px;height:1.7px;background:#474747;border-radius:50%"></div>
<div style="position:absolute;left:533.7px;top:457.61px;width:1.7px;height:1.7px;background:#474747;border-radius:50%"></div>
<div style="position:absolute;left:541.4px;top:457.61px;width:1.7px;height:1.7px;background:#474747;border-radius:50%"></div>
<div style="position:absolute;left:549.1px;top:457.61px;width:1.7px;height:1.7px;background:#474747;border-radius:50%"></div>
<div style="position:absolute;left:810.9px;top:457.61px;width:1.7px;height:1.7px;background:#474747;border-radius:50%"></div>
<div class="cl" style="top:450.56px">        <span style="color:#9cdcfe">&quot;CMAKE_LIBRARY_OUTPUT_DIRECTORY&quot;</span><span style="color:#cccccc">:</span> <span style="color:#ce9178">&quot;$env{binaryDir}&quot;</span><span style="color:#cccccc">,</span></div>
<div class="ln" style="top:469.52px;color:#6e7681">23</div>
<div style="position:absolute;left:495.2px;top:476.57px;width:1.7px;height:1.7px;background:#474747;border-radius:50%"></div>
<div style="position:absolute;left:502.9px;top:476.57px;width:1.7px;height:1.7px;background:#474747;border-radius:50%"></div>
<div style="position:absolute;left:510.6px;top:476.57px;width:1.7px;height:1.7px;background:#474747;border-radius:50%"></div>
<div style="position:absolute;left:518.3px;top:476.57px;width:1.7px;height:1.7px;background:#474747;border-radius:50%"></div>
<div style="position:absolute;left:526.0px;top:476.57px;width:1.7px;height:1.7px;background:#474747;border-radius:50%"></div>
<div style="position:absolute;left:533.7px;top:476.57px;width:1.7px;height:1.7px;background:#474747;border-radius:50%"></div>
<div style="position:absolute;left:541.4px;top:476.57px;width:1.7px;height:1.7px;background:#474747;border-radius:50%"></div>
<div style="position:absolute;left:549.1px;top:476.57px;width:1.7px;height:1.7px;background:#474747;border-radius:50%"></div>
<div style="position:absolute;left:810.9px;top:476.57px;width:1.7px;height:1.7px;background:#474747;border-radius:50%"></div>
<div class="cl" style="top:469.52px">        <span style="color:#9cdcfe">&quot;CMAKE_ARCHIVE_OUTPUT_DIRECTORY&quot;</span><span style="color:#cccccc">:</span> <span style="color:#ce9178">&quot;$env{binaryDir}&quot;</span></div>
<div class="ln" style="top:488.48px;color:#6e7681">24</div>
<div style="position:absolute;left:495.2px;top:495.53000000000003px;width:1.7px;height:1.7px;background:#474747;border-radius:50%"></div>
<div style="position:absolute;left:502.9px;top:495.53000000000003px;width:1.7px;height:1.7px;background:#474747;border-radius:50%"></div>
<div style="position:absolute;left:510.6px;top:495.53000000000003px;width:1.7px;height:1.7px;background:#474747;border-radius:50%"></div>
<div style="position:absolute;left:518.3px;top:495.53000000000003px;width:1.7px;height:1.7px;background:#474747;border-radius:50%"></div>
<div style="position:absolute;left:526.0px;top:495.53000000000003px;width:1.7px;height:1.7px;background:#474747;border-radius:50%"></div>
<div style="position:absolute;left:533.7px;top:495.53000000000003px;width:1.7px;height:1.7px;background:#474747;border-radius:50%"></div>
<div class="cl" style="top:488.48px">      <span style="color:#ffd700">}</span></div>
<div class="ln" style="top:507.44px;color:#6e7681">25</div>
<div style="position:absolute;left:495.2px;top:514.49px;width:1.7px;height:1.7px;background:#474747;border-radius:50%"></div>
<div style="position:absolute;left:502.9px;top:514.49px;width:1.7px;height:1.7px;background:#474747;border-radius:50%"></div>
<div style="position:absolute;left:510.6px;top:514.49px;width:1.7px;height:1.7px;background:#474747;border-radius:50%"></div>
<div style="position:absolute;left:518.3px;top:514.49px;width:1.7px;height:1.7px;background:#474747;border-radius:50%"></div>
<div class="cl" style="top:507.44px">    <span style="color:#179fff">}</span><span style="color:#cccccc">,</span></div>
<svg style="position:absolute;left:494px;top:372px" width="14" height="18" viewBox="0 0 14 18"><path d="M7 2.5 C4.2 2.5 2.2 4.5 2.2 7 C2.2 8.8 3.3 10 4.2 11 L4.6 14.2 H9.4 L9.8 11 C10.7 10 11.8 8.8 11.8 7 C11.8 4.5 9.8 2.5 7 2.5 Z" fill="#ffcc00"/><rect x="5.2" y="12.3" width="3.6" height="2.4" fill="#1f1f1f"/><path d="M4.6 12 H9.4 V15.2 C9.4 16.2 8.4 16.6 7 16.6 C5.6 16.6 4.6 16.2 4.6 15.2 Z" fill="#ffcc00"/><rect x="6" y="13.2" width="2" height="2" fill="#1f1f1f"/></svg>
<svg style="position:absolute;left:0px;top:0px" width="1241" height="525" viewBox="0 0 1241 525"><rect x="25.85" y="204.65" width="197.1" height="22.3" rx="4.6" fill="none" stroke="#0c0c18" stroke-width="5.3"/><rect x="548.75" y="371.25" width="228.2" height="23.3" rx="4.6" fill="none" stroke="#0c0c18" stroke-width="5.3"/><line x1="224" y1="209.8" x2="428.5" y2="25.6" stroke="#0c0c18" stroke-width="5.2" stroke-linecap="round"/><path d="M435.8 19.1 L425.3 22.9 L432.1 29.9 Z" fill="#0c0c18" stroke="#0c0c18" stroke-width="3.3" stroke-linejoin="round"/><rect x="25.85" y="204.65" width="197.1" height="22.3" rx="4.6" fill="none" stroke="#ffff00" stroke-width="3.5"/><rect x="548.75" y="371.25" width="228.2" height="23.3" rx="4.6" fill="none" stroke="#ffff00" stroke-width="3.5"/><line x1="224" y1="209.8" x2="428.5" y2="25.6" stroke="#ffff00" stroke-width="3.4" stroke-linecap="round"/><path d="M435.8 19.1 L425.3 22.9 L432.1 29.9 Z" fill="#ffff00" stroke="#ffff00" stroke-width="1.5" stroke-linejoin="round"/></svg>
</body></html>
